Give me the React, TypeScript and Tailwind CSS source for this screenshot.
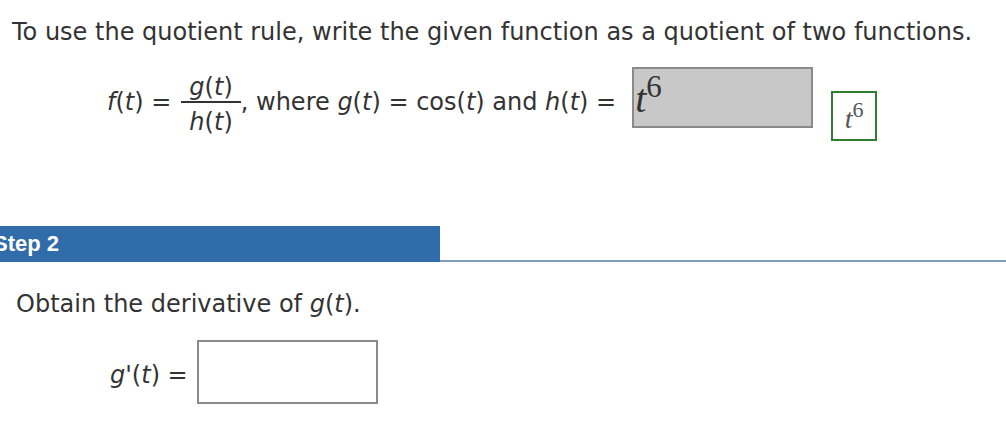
import React from "react";

const sans = { fontFamily: '"DejaVu Sans", Verdana, sans-serif' };
const serif = { fontFamily: '"Liberation Serif", "DejaVu Serif", serif' };

function M({ children }: { children: React.ReactNode }) {
  return <span className="italic">{children}</span>;
}

export default function App() {
  return (
    <div
      className="w-[1006px] h-[428px] bg-white overflow-hidden text-[#333333] text-[24px] leading-[28px]"
      style={sans}
    >
      <p className="pl-[12px] pt-[18px] whitespace-nowrap">
        To use the quotient rule, write the given function as a quotient of two functions.
      </p>

      <div className="mt-[21px] flex items-start pl-[107px] whitespace-nowrap h-[74px]">
        <span className="mt-[21px]">
          <M>f</M>(<M>t</M>) =
        </span>
        <span className="mt-[6px] flex flex-col items-center ml-[10px]">
          <span className="px-[8px]">
            <M>g</M>(<M>t</M>)
          </span>
          <span className="block h-[2px] w-full bg-[#333333]" />
          <span className="mt-[5px] px-[8px]">
            <M>h</M>(<M>t</M>)
          </span>
        </span>
        <span className="mt-[21px]">
          , where <M>g</M>(<M>t</M>) = cos(<M>t</M>) and <M>h</M>(<M>t</M>) =
        </span>
        <div className="ml-[16px] w-[181px] h-[61px] bg-[#c8c8c8] border-2 border-[#8a8a8a] overflow-hidden">
          <span className="block pl-[1px] leading-[40px] mt-[10px] text-[#333333]" style={serif}>
            <span className="italic text-[40px]">t</span>
            <span className="text-[31px] relative top-[-15px]">6</span>
          </span>
        </div>
        <div className="ml-[18px] mt-[24px] w-[46px] h-[50px] border-2 border-[#2e7d32] flex items-center justify-center">
          <span className="text-[#555555] leading-none mt-[6px]" style={serif}>
            <span className="italic text-[28px]">t</span>
            <span className="text-[22px] relative top-[-11px]">6</span>
          </span>
        </div>
      </div>

      <div className="mt-[85px] flex items-end">
        <div className="w-[440px] h-[36px] bg-[#2f6ca9] flex items-center overflow-hidden">
          <span
            className="ml-[-7px] text-white font-bold text-[22px] leading-[36px]"
            style={{ fontFamily: '"Liberation Sans", Arial, sans-serif' }}
          >
            Step 2
          </span>
        </div>
        <div className="flex-1 h-[2px] bg-[#7f9dbb]" />
      </div>

      <p className="mt-[28px] pl-[16px] whitespace-nowrap">
        Obtain the derivative of <M>g</M>(<M>t</M>).
      </p>

      <div className="mt-[22px] flex items-start pl-[110px] whitespace-nowrap">
        <span className="mt-[21px]">
          <M>g</M>'(<M>t</M>) =
        </span>
        <div className="ml-[9px] w-[181px] h-[64px] bg-white border-2 border-[#8a8a8a]" />
      </div>
    </div>
  );
}
